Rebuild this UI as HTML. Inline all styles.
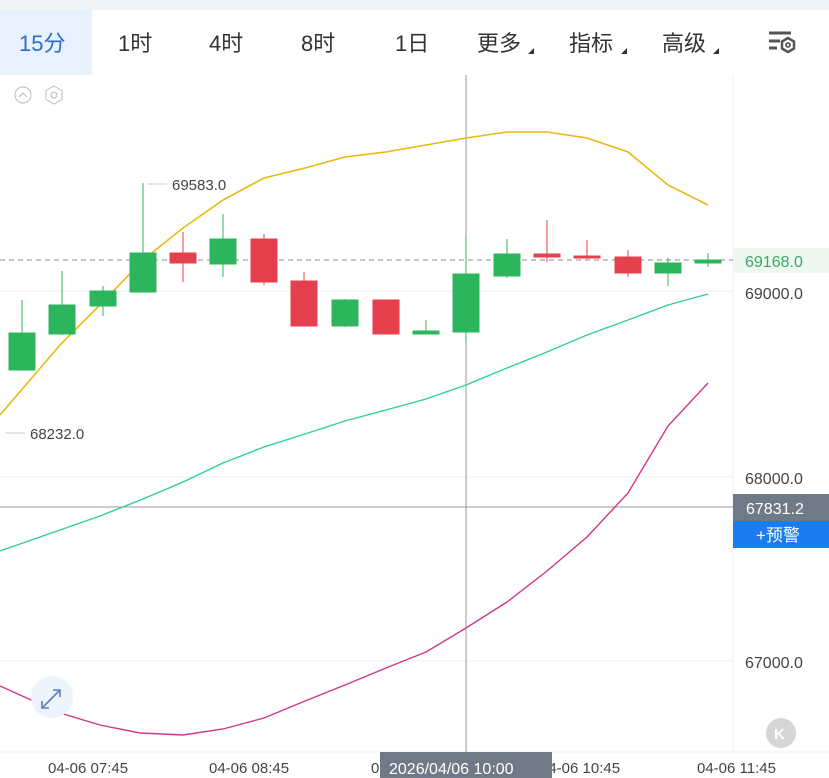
<!DOCTYPE html>
<html><head><meta charset="utf-8"><style>
body{margin:0;width:829px;height:778px;overflow:hidden;background:#fff;font-family:"Liberation Sans","Noto Sans CJK SC",sans-serif;}
</style></head><body>
<svg width="829" height="778" xmlns="http://www.w3.org/2000/svg" style="position:absolute;left:0;top:0;font-family:'Liberation Sans','Noto Sans CJK SC',sans-serif">
<rect x="0" y="0" width="829" height="10" fill="#f3f4f6"/>
<rect x="0" y="10" width="92" height="65" fill="#e8f2fd"/>
<g font-size="22" fill="#333">
<text x="19" y="51" fill="#2a6fc9">15分</text>
<text x="118" y="51">1时</text>
<text x="209" y="51">4时</text>
<text x="301" y="51">8时</text>
<text x="395" y="51">1日</text>
<text x="477" y="51">更多</text>
<text x="569" y="51">指标</text>
<text x="662" y="51">高级</text>
</g>
<g fill="#333"><polygon points="528,54 534,48 534,54"/><polygon points="621,54 627,48 627,54"/><polygon points="713,54 719,48 719,54"/></g>
<g stroke="#555" stroke-width="3" fill="none"><line x1="769" y1="33" x2="791" y2="33"/><line x1="769" y1="41" x2="780" y2="41"/><line x1="769" y1="48" x2="777" y2="48"/>
<polygon points="788,38 794,41.5 794,48.5 788,52 782,48.5 782,41.5" stroke-width="2.5"/><circle cx="788" cy="45" r="2" stroke-width="1.8"/></g>
<circle cx="23" cy="95" r="8" fill="none" stroke="#bbb" stroke-width="1"/><polyline points="19,97 23,93 27,97" fill="none" stroke="#bbb"/>
<polygon points="54,86 62,90.5 62,99.5 54,104 46,99.5 46,90.5" fill="none" stroke="#bbb"/><circle cx="54" cy="95" r="3" fill="none" stroke="#bbb"/>
<line x1="733" y1="75" x2="733" y2="752" stroke="#eef0f2"/>
<g stroke="#eef0f2"><line x1="0" y1="291" x2="733" y2="291"/><line x1="0" y1="477" x2="733" y2="477"/><line x1="0" y1="661" x2="733" y2="661"/><line x1="0" y1="752" x2="829" y2="752"/></g>
<line x1="0" y1="260" x2="733" y2="260" stroke="#888" stroke-dasharray="5,4"/>
<line x1="466" y1="75" x2="466" y2="752" stroke="#999"/>
<line x1="0" y1="507" x2="733" y2="507" stroke="#999"/>
<polyline fill="none" stroke="#e8b90f" stroke-width="1.6" points="0,415 30,380 60,345 100,305 143,260 183,228 223,200 264,178 305,168 345,157 386,152 426,145 466,138 507,132 547,132 587,138 628,152 668,185 708,205"/>
<polyline fill="none" stroke="#2ccfa2" stroke-width="1.4" points="0,551 60,530 100,516 143,499 183,482 223,463 264,447 305,434 345,421 386,410 426,399 466,385 507,368 547,352 587,335 628,320 668,305 708,294"/>
<polyline fill="none" stroke="#d1358a" stroke-width="1.4" points="0,686 60,713 100,725 140,733 183,735 223,729 264,718 305,701 345,685 386,668 426,652 466,628 507,602 547,571 587,537 628,493 668,426 708,383"/>
<g fill="#2db55d" stroke="#2db55d">
<line x1="22" y1="300" x2="22" y2="370"/><rect x="9" y="333" width="26" height="37"/>
<line x1="62" y1="271" x2="62" y2="335"/><rect x="49" y="305" width="26" height="29"/>
<line x1="103" y1="286" x2="103" y2="316"/><rect x="90" y="291" width="26" height="15"/>
<line x1="143" y1="183" x2="143" y2="292"/><rect x="130" y="253" width="26" height="39"/>
<line x1="223" y1="214" x2="223" y2="277"/><rect x="210" y="239" width="26" height="25"/>
<line x1="345" y1="299" x2="345" y2="327"/><rect x="332" y="300" width="26" height="26"/>
<line x1="426" y1="320" x2="426" y2="334"/><rect x="413" y="331" width="26" height="3"/>
<line x1="466" y1="235" x2="466" y2="342"/><rect x="453" y="274" width="26" height="58"/>
<line x1="507" y1="239" x2="507" y2="278"/><rect x="494" y="254" width="26" height="22"/>
<line x1="668" y1="258" x2="668" y2="286"/><rect x="655" y="263" width="26" height="10"/>
<line x1="708" y1="253" x2="708" y2="267"/><rect x="695" y="260" width="26" height="3"/>
</g>
<g fill="#e5404e" stroke="#e5404e">
<line x1="183" y1="232" x2="183" y2="282"/><rect x="170" y="253" width="26" height="10"/>
<line x1="264" y1="234" x2="264" y2="285"/><rect x="251" y="239" width="26" height="43"/>
<line x1="304" y1="272" x2="304" y2="326"/><rect x="291" y="281" width="26" height="45"/>
<line x1="386" y1="300" x2="386" y2="334"/><rect x="373" y="300" width="26" height="34"/>
<line x1="547" y1="220" x2="547" y2="262"/><rect x="534" y="254" width="26" height="3"/>
<line x1="587" y1="240" x2="587" y2="259"/><rect x="574" y="256" width="26" height="2"/>
<line x1="628" y1="250" x2="628" y2="277"/><rect x="615" y="257" width="26" height="16"/>
</g>
<line x1="147" y1="184" x2="167" y2="184" stroke="#ccc"/>
<text x="172" y="190" font-size="15" fill="#444">69583.0</text>
<line x1="5" y1="433" x2="25" y2="433" stroke="#ccc"/>
<text x="30" y="439" font-size="15" fill="#444">68232.0</text>
<rect x="734" y="248" width="95" height="25" fill="#eef8f1"/>
<text x="745" y="267" font-size="16" fill="#3aa767">69168.0</text>
<text x="745" y="299" font-size="16" fill="#444">69000.0</text>
<text x="745" y="484" font-size="16" fill="#444">68000.0</text>
<text x="745" y="668" font-size="16" fill="#444">67000.0</text>
<rect x="733" y="494" width="96" height="27" fill="#707a86"/>
<text x="746" y="514" font-size="16" fill="#fff">67831.2</text>
<rect x="733" y="521" width="96" height="27" fill="#1a7cf0"/>
<text x="756" y="541" font-size="17" fill="#fff">+预警</text>
<circle cx="781" cy="733" r="15" fill="#d6d6d6"/>
<text x="774" y="739" font-size="15" font-weight="bold" fill="#fff">K</text>
<circle cx="52" cy="697" r="21" fill="#eef4fb"/>
<g stroke="#5a7fc4" stroke-width="1.6" fill="none"><line x1="42" y1="708" x2="60" y2="690"/><polyline points="53,690 60,690 60,697"/><polyline points="42,701 42,708 49,708"/></g>
<g font-size="15" fill="#444">
<text x="48" y="773">04-06 07:45</text>
<text x="209" y="773">04-06 08:45</text>
<text x="371" y="773">0</text>
<text x="540" y="773">04-06 10:45</text>
<text x="697" y="773">04-06 11:45</text>
</g>
<rect x="380" y="752" width="172" height="26" fill="#707a86"/>
<text x="389" y="774" font-size="16" fill="#fff">2026/04/06 10:00</text>
</svg>
</body></html>
